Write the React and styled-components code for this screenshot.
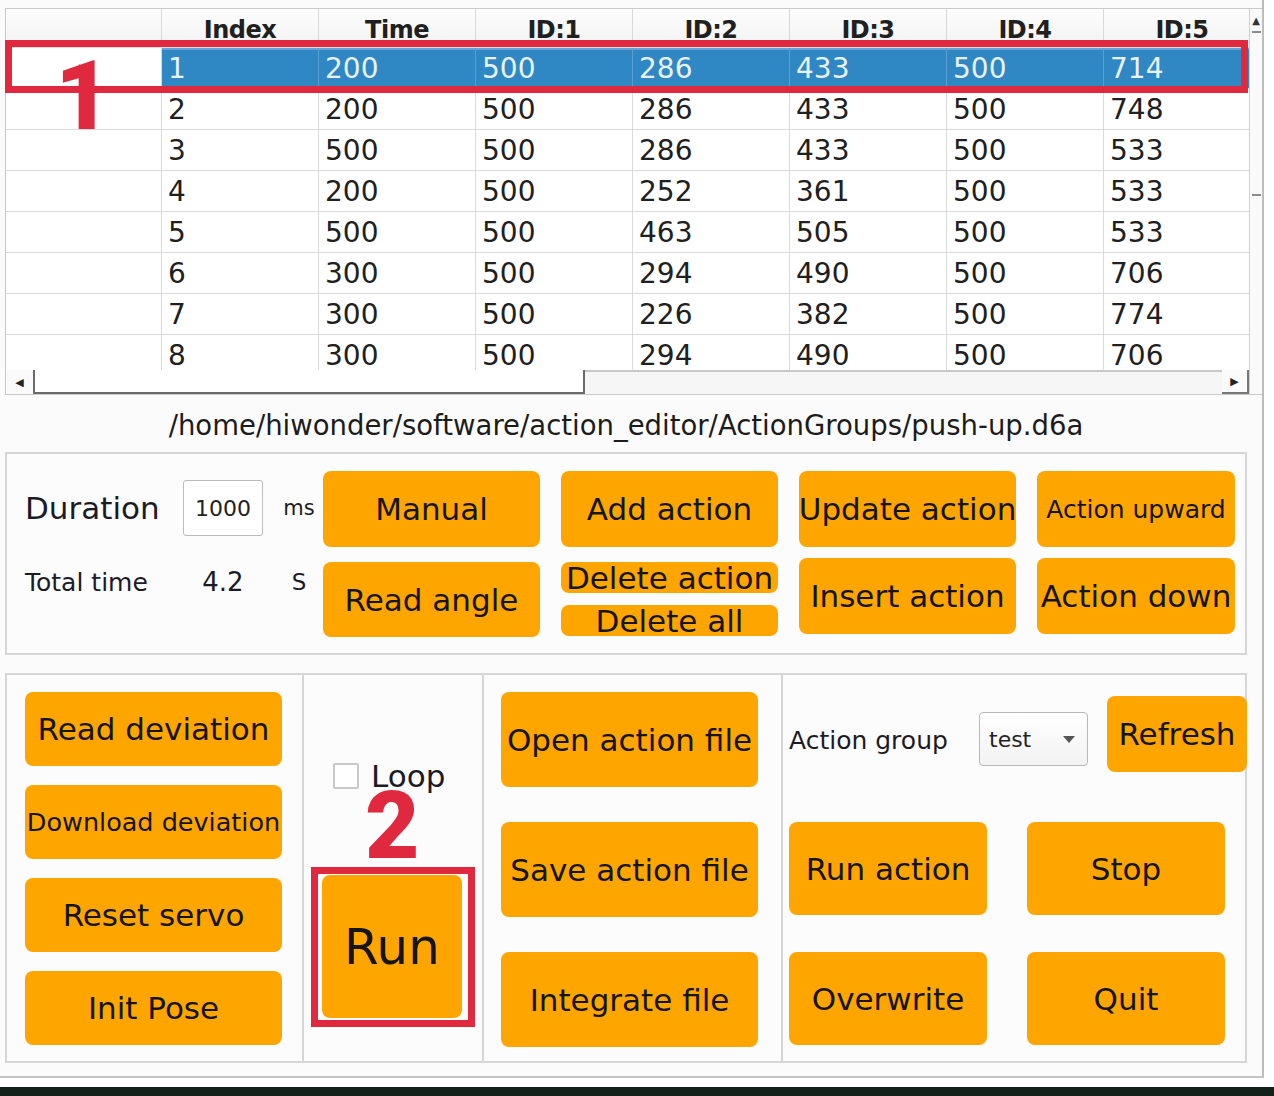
import React from "react";
import styled, { createGlobalStyle } from "styled-components";

const GlobalStyle = createGlobalStyle`
  html, body {
    margin: 0;
    padding: 0;
    background: #ffffff;
    font-family: "DejaVu Sans", "Liberation Sans", sans-serif;
  }
`;

const ORANGE = "#ffa500";
const MARK = "#e0293f";

const Page = styled.div`
  position: relative;
  width: 1274px;
  height: 1096px;
  overflow: hidden;
  background: #ffffff;
`;

const Window = styled.div`
  width: 1264px;
  height: 1078px;
  box-sizing: border-box;
  padding: 8px 0 0 5px;
  background: #fbfbfb;
  border-right: 2px solid #bdbdbd;
  border-bottom: 2px solid #c4c4c4;
`;

const BottomBand = styled.div`
  margin-top: 9px;
  height: 9px;
  background: #13201a;
`;

/* ---------- table ---------- */

const TableFrame = styled.div`
  display: flex;
  height: 387px;
  box-sizing: border-box;
  border: 1px solid #c9c9c9;
  border-right: none;
  background: #ffffff;
`;

const GridPane = styled.div`
  width: 1243px;
  display: flex;
  flex-direction: column;
  border-right: 1px solid #cfcfcf;
`;

const GridBody = styled.div`
  flex: 1;
  overflow: hidden;
`;

const Row = styled.div`
  display: grid;
  grid-template-columns: 156px repeat(7, 157px);
  height: ${(p) => (p.$header ? 39 : 41)}px;
  box-sizing: border-box;
  border-bottom: 1px solid #dadada;
`;

const HeadCell = styled.div`
  display: flex;
  align-items: center;
  justify-content: center;
  padding-top: 3px;
  border-right: 1px solid #d8d8d8;
  background: linear-gradient(#fdfdfd, #f2f2f2);
  font-weight: bold;
  font-size: 24px;
  letter-spacing: -0.5px;
  color: #202020;
`;

const RowHead = styled.div`
  display: flex;
  align-items: center;
  justify-content: center;
  border-right: 1px solid #d8d8d8;
  background: #ffffff;
  font-size: 12px;
  color: #111;
`;

const Cell = styled.div`
  display: flex;
  align-items: center;
  padding-left: 6px;
  border-right: 1px solid ${(p) => (p.$selected ? "#5a9fd0" : "#dadada")};
  font-size: 28px;
  color: ${(p) => (p.$selected ? "#e9f2fa" : "#202020")};
  background: ${(p) => (p.$selected ? "#2f87c3" : "#ffffff")};
  box-shadow: ${(p) => (p.$selected ? "inset 0 2px 0 #63a4d6" : "none")};
`;

const HScroll = styled.div`
  display: flex;
  height: 24px;
  background: #fafafa;
`;

const ScrollArrow = styled.div`
  width: ${(p) => p.$w}px;
  display: flex;
  align-items: center;
  justify-content: center;
  font-size: 11px;
  color: #222;
  box-sizing: border-box;
  border-bottom: ${(p) => (p.$edge ? "2px solid #777" : "none")};
  border-right: ${(p) => (p.$edge ? "2px solid #777" : "none")};
`;

const ScrollThumb = styled.div`
  width: 552px;
  box-sizing: border-box;
  border-left: 2px solid #6b6b6b;
  border-right: 2px solid #6b6b6b;
  border-bottom: 2px solid #6b6b6b;
  background: #ffffff;
`;

const ScrollTrough = styled.div`
  flex: 1;
  border-top: 2px solid #c8c8c8;
  background: #f6f6f6;
`;

const VScroll = styled.div`
  flex: 1;
  display: flex;
  flex-direction: column;
  align-items: center;
  background: #fafafa;
`;

const UpArrow = styled.div`
  height: 22px;
  display: flex;
  align-items: center;
  font-size: 10px;
  color: #333;
`;

const VThumb = styled.div`
  width: 9px;
  height: 165px;
  box-sizing: border-box;
  border-top: 2px solid #8a8a8a;
  border-bottom: 2px solid #8a8a8a;
`;

/* ---------- path ---------- */

const PathLabel = styled.div`
  width: 1242px;
  height: 57px;
  display: flex;
  align-items: center;
  justify-content: center;
  padding-top: 2px;
  box-sizing: border-box;
  font-size: 27.5px;
  color: #1c1c1c;
`;

/* ---------- group boxes ---------- */

const GroupBox = styled.div`
  width: 1242px;
  height: ${(p) => p.$h}px;
  margin-top: ${(p) => p.$mt}px;
  box-sizing: border-box;
  border: 2px solid #d6d6d6;
  display: flex;
  background: #fcfcfc;
`;

const Info = styled.div`
  width: 298px;
  margin: 17px 0 0 18px;
  display: grid;
  grid-template-columns: 158px 80px 20px 32px;
  grid-template-rows: 74px 74px;
  align-items: center;
`;

const InfoText = styled.span`
  font-size: ${(p) => p.$size}px;
  color: #1b1b25;
  text-align: ${(p) => (p.$center ? "center" : "left")};
  white-space: nowrap;
`;

const DurationInput = styled.div`
  height: 56px;
  box-sizing: border-box;
  border: 1px solid #bcbcbc;
  border-radius: 3px;
  background: #ffffff;
  display: flex;
  align-items: center;
  justify-content: center;
  font-size: 22px;
  color: #222;
`;

const ButtonGrid = styled.div`
  margin-top: 17px;
  display: grid;
  grid-template-columns: 217px 217px 217px 198px;
  grid-template-rows: 76px 76px;
  column-gap: 21px;
  row-gap: 11px;
`;

const ActionButton = styled.button`
  width: ${(p) => (p.$w ? `${p.$w}px` : "100%")};
  height: ${(p) => (p.$h ? `${p.$h}px` : "100%")};
  margin-top: ${(p) => p.$mt || 0}px;
  padding: 0;
  border: none;
  border-radius: 8px;
  background: ${ORANGE};
  color: #151515;
  font-family: "DejaVu Sans", sans-serif;
  font-size: ${(p) => p.$size || 31}px;
  white-space: nowrap;
  display: flex;
  align-items: center;
  justify-content: center;
  overflow: visible;
  flex-shrink: 0;
`;

const DeleteStack = styled.div`
  padding-top: 4px;
  display: flex;
  flex-direction: column;
  gap: 12px;
`;

const Section = styled.div`
  width: ${(p) => (p.$w ? `${p.$w}px` : "auto")};
  flex: ${(p) => (p.$w ? "none" : 1)};
  box-sizing: border-box;
  border-left: ${(p) => (p.$divider ? "2px solid #d6d6d6" : "none")};
  padding: ${(p) => p.$pad};
  display: flex;
  flex-direction: column;
  gap: ${(p) => p.$gap || 0}px;
`;

const LoopRow = styled.label`
  margin: 84px 0 0 11px;
  height: 34px;
  display: flex;
  align-items: center;
  gap: 12px;
  font-size: 31px;
  color: #1b1b25;
`;

const CheckBox = styled.span`
  width: 26px;
  height: 26px;
  box-sizing: border-box;
  border: 2px solid #c8c8c8;
  border-radius: 2px;
  background: #ffffff;
`;

const TopRow = styled.div`
  height: 76px;
  display: flex;
  align-items: center;
`;

const GroupLabel = styled.span`
  width: 190px;
  margin-top: 12px;
  font-size: 25px;
  color: #1b1b25;
`;

const Combo = styled.div`
  width: 109px;
  height: 54px;
  margin: 10px 19px 0 0;
  box-sizing: border-box;
  border: 1px solid #b8b8b8;
  border-radius: 4px;
  background: linear-gradient(#ffffff, #f2f2f2);
  display: flex;
  align-items: center;
  justify-content: space-between;
  padding: 0 12px 0 9px;
  font-size: 22px;
  color: #222;
`;

const ComboArrow = styled.span`
  width: 0;
  height: 0;
  border-left: 6px solid transparent;
  border-right: 6px solid transparent;
  border-top: 7px solid #555;
`;

const ActionGrid = styled.div`
  margin-top: 50px;
  display: grid;
  grid-template-columns: 198px 198px;
  grid-auto-rows: 93px;
  column-gap: 40px;
  row-gap: 37px;
`;

/* ---------- annotations ---------- */

const MarkBox = styled.div`
  position: absolute;
  left: ${(p) => p.$x}px;
  top: ${(p) => p.$y}px;
  width: ${(p) => p.$w}px;
  height: ${(p) => p.$h}px;
  box-sizing: border-box;
  border: 7px solid ${MARK};
  pointer-events: none;
`;

const MarkNumber = styled.div`
  position: absolute;
  left: ${(p) => p.$x}px;
  top: ${(p) => p.$y}px;
  font-family: Roboto, "Liberation Sans", Arial, sans-serif;
  font-weight: 900;
  font-size: ${(p) => p.$size}px;
  line-height: 1;
  color: ${MARK};
`;

const headers = ["Index", "Time", "ID:1", "ID:2", "ID:3", "ID:4", "ID:5"];

const rows = [
  [1, 200, 500, 286, 433, 500, 714],
  [2, 200, 500, 286, 433, 500, 748],
  [3, 500, 500, 286, 433, 500, 533],
  [4, 200, 500, 252, 361, 500, 533],
  [5, 500, 500, 463, 505, 500, 533],
  [6, 300, 500, 294, 490, 500, 706],
  [7, 300, 500, 226, 382, 500, 774],
  [8, 300, 500, 294, 490, 500, 706],
];

export default function App() {
  return (
    <Page>
      <GlobalStyle />
      <Window>
        <TableFrame>
          <GridPane>
            <GridBody>
              <Row $header>
                <HeadCell />
                {headers.map((h) => (
                  <HeadCell key={h}>{h}</HeadCell>
                ))}
              </Row>
              {rows.map((r, i) => (
                <Row key={i}>
                  <RowHead>{i === 0 ? "▶" : ""}</RowHead>
                  {r.map((v, j) => (
                    <Cell key={j} $selected={i === 0}>
                      {v}
                    </Cell>
                  ))}
                </Row>
              ))}
            </GridBody>
            <HScroll>
              <ScrollArrow $w={27}>◀</ScrollArrow>
              <ScrollThumb />
              <ScrollTrough />
              <ScrollArrow $w={27} $edge>▶</ScrollArrow>
            </HScroll>
          </GridPane>
          <VScroll>
            <UpArrow>▲</UpArrow>
            <VThumb />
          </VScroll>
        </TableFrame>

        <PathLabel>/home/hiwonder/software/action_editor/ActionGroups/push-up.d6a</PathLabel>

        <GroupBox $h={203} $mt={0}>
          <Info>
            <InfoText $size={31}>Duration</InfoText>
            <DurationInput>1000</DurationInput>
            <span />
            <InfoText $size={21} $center>ms</InfoText>
            <InfoText $size={25}>Total time</InfoText>
            <InfoText $size={26} $center>4.2</InfoText>
            <span />
            <InfoText $size={23} $center>S</InfoText>
          </Info>
          <ButtonGrid>
            <ActionButton>Manual</ActionButton>
            <ActionButton>Add action</ActionButton>
            <ActionButton>Update action</ActionButton>
            <ActionButton $size={25}>Action upward</ActionButton>
            <ActionButton $h={75} $mt={4}>Read angle</ActionButton>
            <DeleteStack>
              <ActionButton $h={31}>Delete action</ActionButton>
              <ActionButton $h={31}>Delete all</ActionButton>
            </DeleteStack>
            <ActionButton>Insert action</ActionButton>
            <ActionButton>Action down</ActionButton>
          </ButtonGrid>
        </GroupBox>

        <GroupBox $h={390} $mt={18}>
          <Section $w={295} $pad="17px 0 0 18px" $gap={19}>
            <ActionButton $w={257} $h={74}>Read deviation</ActionButton>
            <ActionButton $w={257} $h={74} $size={25.5}>Download deviation</ActionButton>
            <ActionButton $w={257} $h={74}>Reset servo</ActionButton>
            <ActionButton $w={257} $h={74}>Init Pose</ActionButton>
          </Section>
          <Section $w={180} $divider $pad="0 0 0 18px">
            <LoopRow>
              <CheckBox />
              Loop
            </LoopRow>
            <ActionButton $w={140} $h={143} $mt={82} $size={50}>Run</ActionButton>
          </Section>
          <Section $w={299} $divider $pad="17px 0 0 17px" $gap={35}>
            <ActionButton $w={257} $h={95}>Open action file</ActionButton>
            <ActionButton $w={257} $h={95}>Save action file</ActionButton>
            <ActionButton $w={257} $h={95}>Integrate file</ActionButton>
          </Section>
          <Section $divider $pad="21px 0 0 6px">
            <TopRow>
              <GroupLabel>Action group</GroupLabel>
              <Combo>
                test
                <ComboArrow />
              </Combo>
              <ActionButton $w={140} $h={76}>Refresh</ActionButton>
            </TopRow>
            <ActionGrid>
              <ActionButton>Run action</ActionButton>
              <ActionButton>Stop</ActionButton>
              <ActionButton>Overwrite</ActionButton>
              <ActionButton>Quit</ActionButton>
            </ActionGrid>
          </Section>
        </GroupBox>
      </Window>
      <BottomBand />

      <MarkBox $x={5} $y={40} $w={1243} $h={53} />
      <MarkNumber $x={55} $y={48} $size={97}>1</MarkNumber>
      <MarkNumber $x={365} $y={779} $size={94}>2</MarkNumber>
      <MarkBox $x={311} $y={867} $w={164} $h={160} />
    </Page>
  );
}
